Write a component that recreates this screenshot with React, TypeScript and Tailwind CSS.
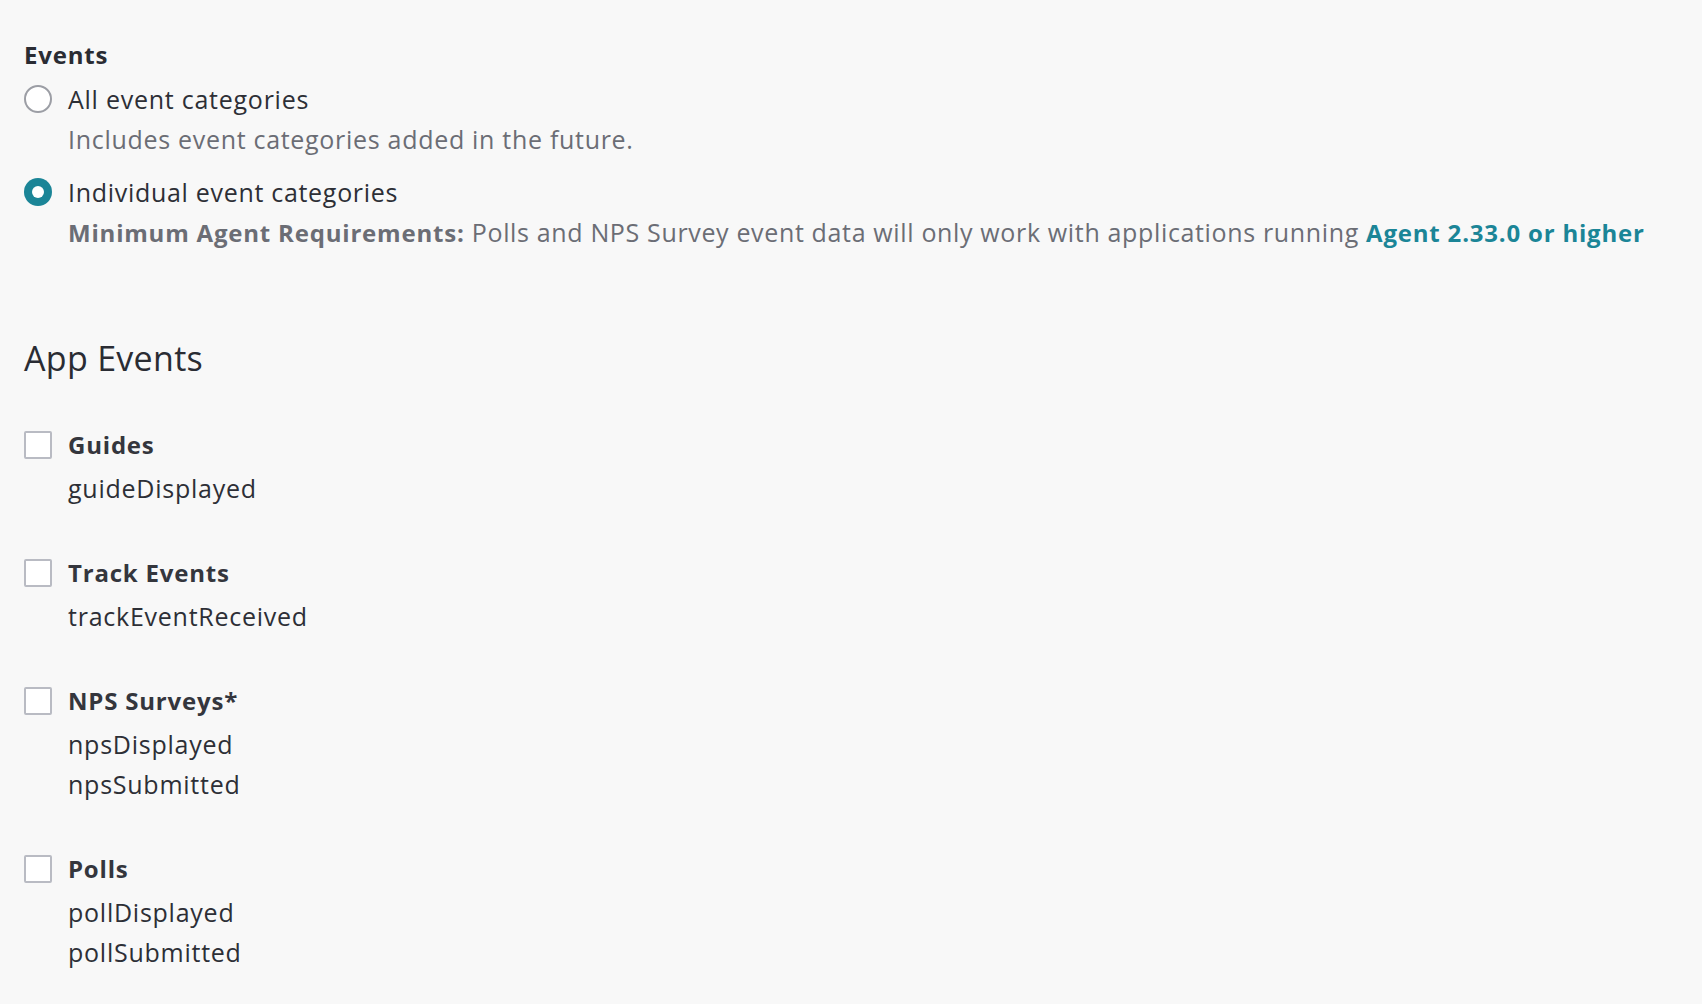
import React from "react";

const font = { fontFamily: '"Open Sans", "Lato", sans-serif' };

function Radio({ checked }: { checked?: boolean }) {
  return checked ? (
    <span className="flex h-[28px] w-[28px] shrink-0 items-center justify-center rounded-full bg-[#1b8597]">
      <span className="h-[12px] w-[12px] rounded-full bg-white" />
    </span>
  ) : (
    <span className="h-[28px] w-[28px] shrink-0 rounded-full border-2 border-[#9c9ea5] bg-white" />
  );
}

function Checkbox() {
  return <span className="h-[28px] w-[28px] shrink-0 rounded-[2px] border-2 border-[#b9bbc3] bg-white" />;
}

function Group({ title, items }: { title: string; items: string[] }) {
  return (
    <div className="mb-[45px]">
      <div className="flex h-[40px] items-center gap-[16px]">
        <Checkbox />
        <span className="text-[24px] font-bold tracking-[0.8px] text-[#34363d]">{title}</span>
      </div>
      <div className="mt-[3px] pl-[44px]">
        {items.map((i) => (
          <div key={i} className="h-[40px] text-[25px] leading-[40px] tracking-[0.75px] text-[#2d2f36]">
            {i}
          </div>
        ))}
      </div>
    </div>
  );
}

export default function App() {
  return (
    <div style={font} className="min-h-screen w-full bg-[#f8f8f8] pl-[24px] pt-[35px] text-[#2d2f36]">
      <div className="h-[40px] text-[24px] font-bold leading-[40px] tracking-[0.8px] text-[#2a2c33]">Events</div>
      <div className="mt-[4px] flex h-[40px] items-center gap-[16px]">
        <Radio />
        <span className="text-[25px] leading-[40px] tracking-[0.75px]">All event categories</span>
      </div>
      <div className="pl-[44px] text-[25px] leading-[40px] tracking-[0.7px] text-[#6b6d75]">Includes event categories added in the future.</div>
      <div className="mt-[13px] flex h-[40px] items-center gap-[16px]">
        <Radio checked />
        <span className="text-[25px] leading-[40px] tracking-[0.7px]">Individual event categories</span>
      </div>
      <div className="pl-[44px] text-[25px] leading-[40px] tracking-[0.65px] text-[#6b6d75]">
        <span className="text-[24px] font-bold tracking-[0.8px]">Minimum Agent Requirements:</span> Polls and NPS Survey event data will only work with applications running{" "}
        <span className="text-[24px] font-bold tracking-[0.8px] text-[#1b8597]">Agent 2.33.0 or higher</span>
      </div>
      <div className="mt-[83px] h-[44px] text-[34px] leading-[44px] tracking-[0.3px] text-[#2a2c33]">App Events</div>
      <div className="mt-[45px]">
        <Group title="Guides" items={["guideDisplayed"]} />
        <Group title="Track Events" items={["trackEventReceived"]} />
        <Group title="NPS Surveys*" items={["npsDisplayed", "npsSubmitted"]} />
        <Group title="Polls" items={["pollDisplayed", "pollSubmitted"]} />
      </div>
    </div>
  );
}
